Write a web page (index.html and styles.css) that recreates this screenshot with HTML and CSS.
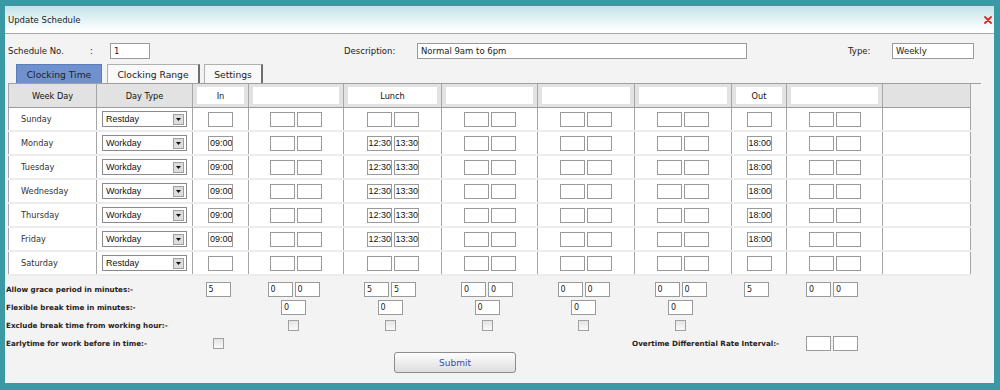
FILE: index.html
```html
<!DOCTYPE html>
<html lang="en">
<head>
    <meta charset="UTF-8">
    <meta name="viewport" content="width=device-width, initial-scale=1.0">
    <title>Update Schedule</title>
    <link rel="stylesheet" href="styles.css">
</head>
<body>

    <div class="dialog">
        <div class="title-bar">
            <span>Update Schedule</span>
            <svg class="close" width="8" height="8" viewBox="0 0 8 8">
                <path d="M1 1 L7 7 M7 1 L1 7" stroke="#e02a2a" stroke-width="1.8" stroke-linecap="round"/>
            </svg>
        </div>

        <div class="content">
            <div class="info-row">
                <span class="lbl-no">Schedule No.</span>
                <span class="colon">:</span>
                <input type="text" class="in-no" value="1">
                <span class="lbl-desc">Description:</span>
                <input type="text" class="in-desc" value="Normal 9am to 6pm">
                <span class="lbl-type">Type:</span>
                <input type="text" class="in-type" value="Weekly">
            </div>

            <div class="tabs">
                <span class="tab active">Clocking Time</span>
                <span class="tab tab-range">Clocking Range</span>
                <span class="tab tab-settings">Settings</span>
            </div>

            <table class="schedule">
                <colgroup>
                    <col style="width:88px"><col style="width:96px"><col style="width:56px"><col style="width:95px">
                    <col style="width:98px"><col style="width:96px"><col style="width:97px"><col style="width:97px">
                    <col style="width:55px"><col style="width:96px"><col style="width:88px">
                </colgroup>
                <thead>
                    <tr>
                        <th>Week Day</th>
                        <th>Day Type</th>
                        <th><div class="hbox">In</div></th>
                        <th><div class="hbox"></div></th>
                        <th><div class="hbox">Lunch</div></th>
                        <th><div class="hbox"></div></th>
                        <th><div class="hbox"></div></th>
                        <th><div class="hbox"></div></th>
                        <th><div class="hbox">Out</div></th>
                        <th><div class="hbox"></div></th>
                        <th></th>
                    </tr>
                </thead>
                <tbody id="rows"></tbody>
            </table>

            <table class="options">
                <colgroup>
                    <col style="width:88px"><col style="width:96px"><col style="width:56px"><col style="width:95px">
                    <col style="width:98px"><col style="width:96px"><col style="width:97px"><col style="width:97px">
                    <col style="width:55px"><col style="width:96px"><col style="width:88px">
                </colgroup>
                <tr>
                    <td colspan="2" class="opt-label">Allow grace period in minutes:-</td>
                    <td><input type="text" class="num" value="5"></td>
                    <td><div class="pair"><input type="text" class="num" value="0"><input type="text" class="num" value="0"></div></td>
                    <td><div class="pair"><input type="text" class="num" value="5"><input type="text" class="num" value="5"></div></td>
                    <td><div class="pair"><input type="text" class="num" value="0"><input type="text" class="num" value="0"></div></td>
                    <td><div class="pair"><input type="text" class="num" value="0"><input type="text" class="num" value="0"></div></td>
                    <td><div class="pair"><input type="text" class="num" value="0"><input type="text" class="num" value="0"></div></td>
                    <td><input type="text" class="num" value="5"></td>
                    <td><div class="pair"><input type="text" class="num" value="0"><input type="text" class="num" value="0"></div></td>
                    <td></td>
                </tr>
                <tr>
                    <td colspan="2" class="opt-label">Flexible break time in minutes:-</td>
                    <td></td>
                    <td><input type="text" class="num" value="0"></td>
                    <td><input type="text" class="num" value="0"></td>
                    <td><input type="text" class="num" value="0"></td>
                    <td><input type="text" class="num" value="0"></td>
                    <td><input type="text" class="num" value="0"></td>
                    <td></td><td></td><td></td>
                </tr>
                <tr>
                    <td colspan="2" class="opt-label">Exclude break time from working hour:-</td>
                    <td></td>
                    <td><input type="checkbox" class="check"></td>
                    <td><input type="checkbox" class="check"></td>
                    <td><input type="checkbox" class="check"></td>
                    <td><input type="checkbox" class="check"></td>
                    <td><input type="checkbox" class="check"></td>
                    <td></td><td></td><td></td>
                </tr>
                <tr>
                    <td colspan="2" class="opt-label">Earlytime for work before in time:-</td>
                    <td><input type="checkbox" class="check"></td>
                    <td></td><td></td><td></td><td></td>
                    <td colspan="2" class="opt-label">Overtime Differential Rate Interval:-</td>
                    <td><div class="pair"><input type="text" class="num"><input type="text" class="num"></div></td>
                    <td></td>
                </tr>
            </table>

            <div class="actions">
                <button class="submit">Submit</button>
            </div>
        </div>
    </div>

    <script>
        var days = [
            { name: "Sunday", type: "Restday" },
            { name: "Monday", type: "Workday" },
            { name: "Tuesday", type: "Workday" },
            { name: "Wednesday", type: "Workday" },
            { name: "Thursday", type: "Workday" },
            { name: "Friday", type: "Workday" },
            { name: "Saturday", type: "Restday" }
        ];

        function box(value) {
            return '<input type="text" class="time" value="' + (value || "") + '">';
        }

        function pair(a, b) {
            return '<div class="pair">' + box(a) + box(b) + '</div>';
        }

        var html = "";
        days.forEach(function (day) {
            var work = day.type === "Workday";
            html += '<tr>' +
                '<td class="day">' + day.name + '</td>' +
                '<td><div class="select"><span>' + day.type + '</span>' +
                '<span class="arrow"><svg width="5" height="3" viewBox="0 0 5 3"><path d="M0 0 H5 L2.5 3 Z" fill="#111"/></svg></span></div></td>' +
                '<td>' + box(work ? "09:00" : "") + '</td>' +
                '<td>' + pair() + '</td>' +
                '<td>' + (work ? pair("12:30", "13:30") : pair()) + '</td>' +
                '<td>' + pair() + '</td>' +
                '<td>' + pair() + '</td>' +
                '<td>' + pair() + '</td>' +
                '<td>' + box(work ? "18:00" : "") + '</td>' +
                '<td>' + pair() + '</td>' +
                '<td></td>' +
                '</tr>';
        });
        document.getElementById("rows").innerHTML = html;
    </script>

</body>
</html>
```

FILE: styles.css
```css
body {
    margin: 0;
    padding: 6px 6px 7px 5px;
    background: #3a99a4;
    font-family: "DejaVu Sans", Verdana, sans-serif;
    font-size: 8.5px;
    color: #222;
}
.dialog {
    width: 989px;
    height: 377px;
    background: #f3f3f3;
}
.title-bar {
    height: 27px;
    border-bottom: 1px solid #a8a8a8;
    background: linear-gradient(#c2e3e7, #ffffff 90%);
    display: flex;
    align-items: center;
    justify-content: space-between;
    padding: 0 2px 0 3px;
}
.content {
    padding: 0 3px;
}
input {
    box-sizing: border-box;
    border: 1px solid #9a9a9a;
    background: white;
    margin: 0;
    outline: none;
    color: #222;
}
.info-row {
    display: flex;
    align-items: center;
    height: 16px;
    margin-top: 9px;
}
.info-row input {
    height: 16px;
    padding: 0 3px;
    font-family: "DejaVu Sans", Verdana, sans-serif;
    font-size: 8.5px;
}
.lbl-no {
    width: 82px;
}
.colon {
    width: 20px;
}
.in-no {
    width: 40px;
}
.lbl-desc {
    margin-left: 194px;
    width: 73px;
}
.in-desc {
    width: 330px;
}
.lbl-type {
    margin-left: 101px;
    width: 44px;
}
.in-type {
    width: 82px;
}
.tabs {
    display: flex;
    align-items: flex-end;
    width: 965px;
    height: 19px;
    margin-top: 5px;
    padding-left: 8px;
    border-bottom: 1px solid #a0a0a0;
}
.tab {
    box-sizing: border-box;
    height: 19px;
    width: 93px;
    margin-right: 4px;
    display: flex;
    align-items: center;
    justify-content: center;
    font-size: 9.2px;
    color: #222;
    background: #f9f9f9;
    border: 1px solid #b0b0b0;
    border-right: 2px solid #6e6e6e;
    border-bottom: none;
}
.tab.active {
    width: 86px;
    margin-right: 5px;
    background: #6f92ce;
    border: 1px solid #5a7dbb;
    border-bottom: none;
}
.tab-settings {
    width: 59px;
}
.schedule, .options {
    table-layout: fixed;
    border-collapse: collapse;
    width: 962px;
}
.schedule th {
    height: 23px;
    padding: 0;
    background: #e2e2e2;
    font-weight: normal;
    font-size: 8.2px;
    color: #111;
    border-left: 1px solid #a6a6a6;
    border-right: 1px solid #a6a6a6;
    border-bottom: 1px solid #9c9c9c;
}
.hbox {
    height: 17px;
    margin: 0 4px;
    background: white;
    display: flex;
    align-items: center;
    justify-content: center;
}
.schedule td {
    height: 22px;
    padding: 0;
    background: white;
    text-align: center;
    border-left: 1px solid #a6a6a6;
    border-right: 1px solid #a6a6a6;
    border-bottom: 2px solid #ececec;
}
.schedule td.day {
    text-align: left;
    padding-left: 12px;
    font-size: 8.2px;
    color: #333;
}
.pair {
    display: flex;
    justify-content: center;
    gap: 2px;
}
.time {
    width: 25px;
    height: 15px;
    padding: 0 0 0 1px;
    font-family: "Liberation Sans", Arial, sans-serif;
    font-size: 9px;
    color: #111;
    vertical-align: middle;
}
.select {
    box-sizing: border-box;
    width: 85px;
    height: 16px;
    margin-left: 5px;
    border: 1px solid #8a8a8a;
    background: white;
    display: flex;
    align-items: center;
    padding-left: 3px;
    font-family: "Liberation Sans", Arial, sans-serif;
    font-size: 9px;
    color: #111;
}
.arrow {
    box-sizing: border-box;
    width: 11px;
    height: 11px;
    margin-left: auto;
    margin-right: 2px;
    background: #dcdcdc;
    border: 1px solid #a0a0a0;
    display: flex;
    align-items: center;
    justify-content: center;
}
.options {
    margin-left: -2px;
    margin-top: 4px;
}
.options td {
    height: 18px;
    padding: 0;
    text-align: center;
}
.options td.opt-label {
    text-align: left;
    white-space: nowrap;
    font-weight: bold;
    font-size: 7.2px;
    color: #2a2222;
}
.num {
    width: 25px;
    height: 15px;
    padding: 0 0 0 2px;
    font-family: "DejaVu Sans", Verdana, sans-serif;
    font-size: 8px;
    vertical-align: middle;
}
.check {
    appearance: none;
    width: 11px;
    height: 11px;
    margin: 0;
    border: 1px solid #a0a0a0;
    background: linear-gradient(#e4e4e4, #fafafa);
    vertical-align: middle;
}
.actions {
    padding-left: 386px;
}
.submit {
    width: 122px;
    height: 21px;
    border: 1px solid #8c8c8c;
    border-radius: 3px;
    background: linear-gradient(#fdfdfd, #dedede);
    color: #3a4ca8;
    font-family: "DejaVu Sans", Verdana, sans-serif;
    font-size: 9px;
    cursor: pointer;
}
```
